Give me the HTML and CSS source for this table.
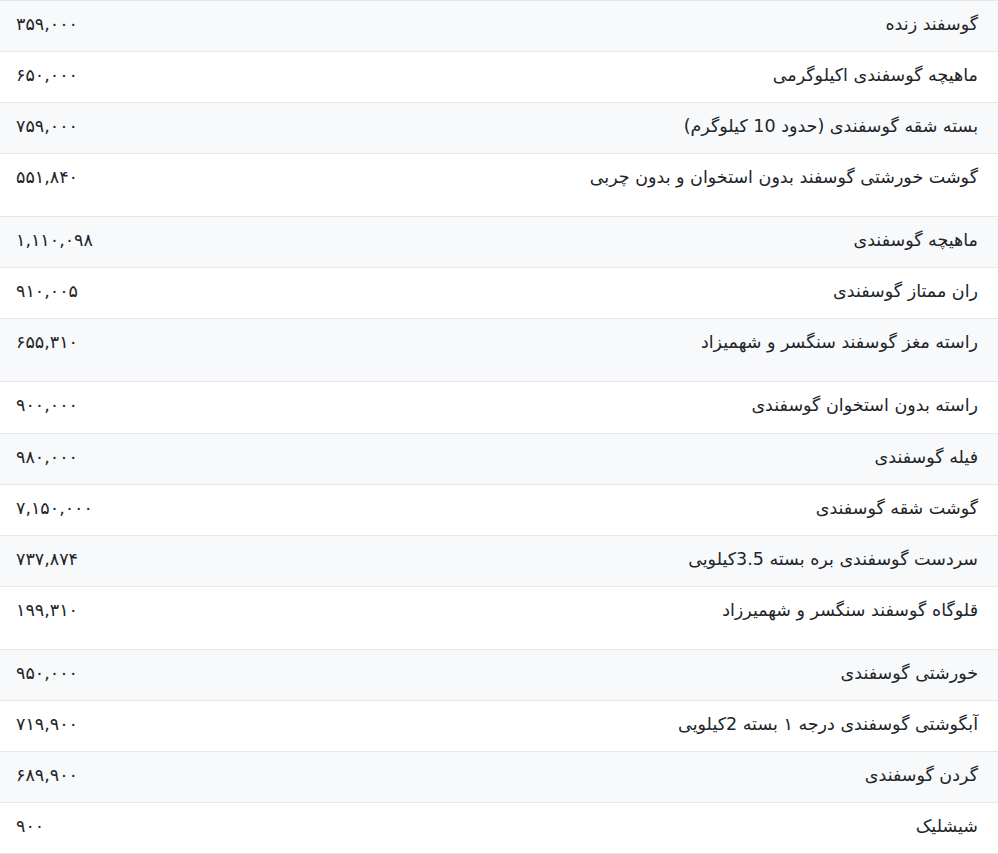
FILE: index.html
```html
<!DOCTYPE html>
<html lang="fa" dir="rtl">
<head>
<meta charset="utf-8">
<title>قیمت گوشت گوسفندی</title>
<link rel="stylesheet" href="styles.css">
</head>
<body>
<table class="price-table">
<tbody>
<tr><td class="name">گوسفند زنده</td><td class="price">۳۵۹,۰۰۰</td></tr>
<tr><td class="name">ماهیچه گوسفندی اکیلوگرمی</td><td class="price">۶۵۰,۰۰۰</td></tr>
<tr><td class="name">بسته شقه گوسفندی (حدود 10 کیلوگرم)</td><td class="price">۷۵۹,۰۰۰</td></tr>
<tr class="tall"><td class="name">گوشت خورشتی گوسفند بدون استخوان و بدون چربی</td><td class="price">۵۵۱,۸۴۰</td></tr>
<tr><td class="name">ماهیچه گوسفندی</td><td class="price">۱,۱۱۰,۰۹۸</td></tr>
<tr><td class="name">ران ممتاز گوسفندی</td><td class="price">۹۱۰,۰۰۵</td></tr>
<tr class="tall"><td class="name">راسته مغز گوسفند سنگسر و شهمیزاد</td><td class="price">۶۵۵,۳۱۰</td></tr>
<tr><td class="name">راسته بدون استخوان گوسفندی</td><td class="price">۹۰۰,۰۰۰</td></tr>
<tr><td class="name">فیله گوسفندی</td><td class="price">۹۸۰,۰۰۰</td></tr>
<tr><td class="name">گوشت شقه گوسفندی</td><td class="price">۷,۱۵۰,۰۰۰</td></tr>
<tr><td class="name">سردست گوسفندی بره بسته 3.5کیلویی</td><td class="price">۷۳۷,۸۷۴</td></tr>
<tr class="tall"><td class="name">قلوگاه گوسفند سنگسر و شهمیرزاد</td><td class="price">۱۹۹,۳۱۰</td></tr>
<tr><td class="name">خورشتی گوسفندی</td><td class="price">۹۵۰,۰۰۰</td></tr>
<tr><td class="name">آبگوشتی گوسفندی درجه ۱ بسته 2کیلویی</td><td class="price">۷۱۹,۹۰۰</td></tr>
<tr><td class="name">گردن گوسفندی</td><td class="price">۶۸۹,۹۰۰</td></tr>
<tr><td class="name">شیشلیک</td><td class="price">۹۰۰</td></tr>
</tbody>
</table>
</body>
</html>
```
FILE: styles.css
```css
html, body {
  margin: 0;
  padding: 0;
  background: #ffffff;
}
body {
  font-family: "DejaVu Sans", sans-serif;
  font-size: 17.5px;
  color: #212529;
}
.price-table {
  width: 100%;
  border-collapse: collapse;
  border-top: 1px solid #e5e7eb;
}
.price-table td {
  padding: 11px 20px 15px 16px;
  line-height: 24.07px;
  border-bottom: 1px solid #e5e7eb;
  vertical-align: top;
}
.price-table tr:nth-child(odd) td {
  background: #f8f9fa;
}
.price-table .name {
  text-align: right;
}
.price-table .price {
  text-align: left;
  white-space: nowrap;
  letter-spacing: -0.3px;
}
.price-table tr.tall td {
  padding-bottom: 27px;
}
```
